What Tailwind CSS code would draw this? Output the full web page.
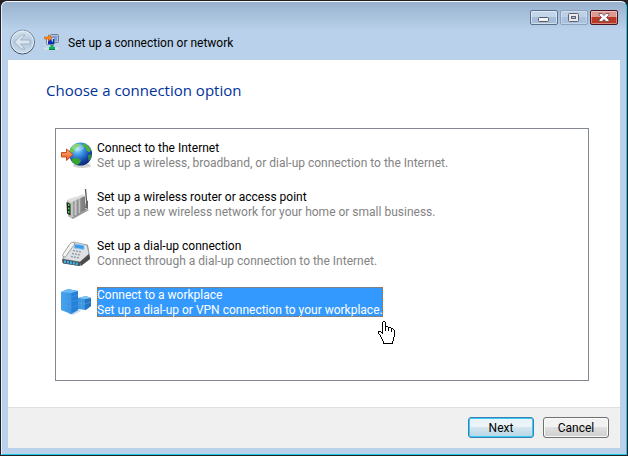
<!DOCTYPE html>
<html lang="en">
<head>
<meta charset="utf-8">
<title>Set up a connection or network</title>
<script src="https://cdn.jsdelivr.net/npm/@tailwindcss/browser@4"></script>
</head>
<body class="min-h-screen bg-[#241f22] font-['Roboto','Open_Sans',sans-serif] text-xs text-black">
<div class="flex min-h-screen flex-col p-px">
<main class="flex grow flex-col rounded-t-md border border-t-[#f4f8fc] border-r-[#19cbe6] border-b-[#19cbe6] border-l-[#e6f0fa] bg-[#b9d1ea] bg-linear-to-b from-[#98b2ce] from-0% to-[#b9d1ea] to-[28px] px-1.5 pb-1.5">
  <header class="flex h-[58px] flex-col">
    <div class="flex justify-end gap-0.5 pt-2 pr-0.5">
      <button aria-label="Minimize" class="flex h-[15px] w-7 items-center justify-center rounded-xs border border-[#5b6f8a] bg-linear-to-b from-[#c3d5e8] from-45% to-[#a5bed9] to-50% inset-ring inset-ring-white/50">
        <svg class="mt-1" width="12" height="6"><rect x=".5" y=".5" width="10" height="4" rx="1" fill="#f4f4f4" stroke="#545868"/></svg>
      </button>
      <button aria-label="Maximize" class="flex h-[15px] w-7 items-center justify-center rounded-xs border border-[#8ba3c0] bg-linear-to-b from-[#bdd0e6] from-45% to-[#a9c2de] to-50% inset-ring inset-ring-white/30">
        <svg width="12" height="9"><rect x=".5" y=".5" width="10" height="8" rx="1" fill="#e9e9ea" stroke="#5d6274"/><rect x="3.500" y="3.500" width="4" height="2" fill="#a9c2de" stroke="#5d6274"/></svg>
      </button>
      <button aria-label="Close" class="flex h-[15px] w-7 items-center justify-center rounded-xs border border-[#4a1420] bg-linear-to-b from-[#dd9a90] from-45% to-[#b93a25] to-50% inset-ring inset-ring-white/40">
        <svg width="12" height="9" viewBox="0 0 12 9"><path d="M1 .5h3l2 2 2-2h3v1.500L8.500 4.500 11 7v1.500H8l-2-2-2 2H1V7l2.500-2.500L1 2z" fill="#fbf9f9" stroke="#5a4a56" stroke-width=".8"/></svg>
      </button>
    </div>
    <div class="flex items-center pt-1 pl-0.5">
      <button aria-label="Back" class="size-[26px]" disabled>
        <svg width="26" height="26" viewBox="0 0 26 26">
          <defs><linearGradient id="bk" x2="0" y2="1"><stop stop-color="#d5e2ed"/><stop offset=".5" stop-color="#b5cade"/><stop offset="1" stop-color="#c8dced"/></linearGradient><linearGradient id="rim" x2="0" y2="1"><stop stop-color="#8195aa"/><stop offset="1" stop-color="#39485c"/></linearGradient></defs>
          <circle cx="12.500" cy="13" r="12" fill="url(#bk)" stroke="url(#rim)"/>
          <circle cx="12.500" cy="13" r="10.900" fill="none" stroke="#e5eef6"/>
          <path d="M11.500 6h3.500l-4.500 5H20v4h-9.500l4.500 5h-3.500L4.500 13z" fill="#dbe6ef" stroke="#9fb3c6"/>
        </svg>
      </button>
      <svg class="ml-2" width="16" height="16" viewBox="0 0 16 16">
        <rect x="6.500" y=".5" width="8" height="8" rx="1" fill="#b4bfd2" stroke="#707d98"/><rect x="8" y="2" width="5" height="5" fill="#7da2dc"/>
        <rect x="2.500" y="3.500" width="8" height="7" rx="1" fill="#dfe4ee" stroke="#77829a"/><rect x="4" y="5" width="6" height="5" fill="#0a2bb5"/><path d="M7 5h2v3H8z" fill="#8fb6ff"/>
        <path d="M0 14.500h5M11 14.500h4" stroke="#d9e1e6" stroke-width="2"/><path d="M6.500 11h3v2h1.500v2.500H5V13h1.500z" fill="#10b15b"/><path d="M5 15.500h6" stroke="#087c45"/>
        <path d="M.5 3h4V.8L8 4 4.500 7.200V5h-4z" fill="#ff8b22" stroke="#c95b08" stroke-width=".6"/>
      </svg>
      <h1 class="ml-2 pt-0.5">Set up a connection or network</h1>
    </div>
  </header>
  <section class="flex grow flex-col bg-white">
    <div class="flex grow flex-col pt-5 pr-[31px] pb-[26px] pl-[47px]">
      <h2 class="-ml-[9px] font-['Open_Sans',sans-serif] text-[15px] leading-5 text-[#003399]">Choose a connection option</h2>
      <ul class="mt-7 flex grow flex-col gap-[19px] border border-[#828790] pt-[11px] pl-1">
        <li><button class="flex h-[30px] items-center gap-[5px] text-left">
          <svg class="size-8" viewBox="0 0 32 32">
            <defs><radialGradient id="gl" cx=".35" cy=".28" r=".75"><stop stop-color="#a8e6ff"/><stop offset=".35" stop-color="#3f9be6"/><stop offset=".75" stop-color="#1546b0"/><stop offset="1" stop-color="#0c2870"/></radialGradient><linearGradient id="or" x2="0" y2="1"><stop stop-color="#ffb27a"/><stop offset="1" stop-color="#e9591a"/></linearGradient></defs>
            <ellipse cx="22" cy="26.500" rx="9" ry="2.500" fill="#777" opacity=".35"/>
            <circle cx="20.500" cy="15" r="11.500" fill="url(#gl)"/>
            <path d="M10 11c1-3 4-5.500 7-6.500l3 1-1 2-3 1-1 3-3 2-2 1z" fill="#69c74a"/><path d="M23 4c3 .5 6 3 8 6.500l-1.500 3-3-2-1-3-3-1z" fill="#4fb03f"/><path d="M12 20c3-2 6-1 9 1l-1 3-3 2c-3-.8-5-3-5.500-5z" fill="#35a52f"/><path d="M28 16l3.500-1c.5 3-1 5-3 7z" fill="#2c8f3a"/>
            <ellipse cx="18" cy="8.500" rx="6" ry="3.500" fill="#fff" opacity=".25"/>
            <path d="M1.500 13.500h5v-3.500l6.500 5.500-6.500 6v-3.500h-5z" fill="url(#or)" stroke="#c64c1c"/>
          </svg>
          <span class="flex h-[30px] flex-col pt-px leading-[15px]"><span>Connect to the Internet</span><span class="text-[#838383]">Set up a wireless, broadband, or dial-up connection to the Internet.</span></span>
        </button></li>
        <li><button class="flex h-[30px] items-center gap-[5px] text-left">
          <svg class="size-8" viewBox="0 0 32 32">
            <defs><linearGradient id="rt"><stop stop-color="#d6d6d6"/><stop offset=".6" stop-color="#a6a6a6"/><stop offset="1" stop-color="#777"/></linearGradient></defs>
            <path d="M8 28l5 3 16-9-5-2z" fill="#9a9a9a"/>
            <path d="M26.500 13L25.500 1" stroke="#555" stroke-width="1.300"/><path d="M25 20l1-8 2 1v8z" fill="#666"/>
            <path d="M8 13l15-6 2 2v13l-14 8z" fill="url(#rt)"/><path d="M7 12l4-2c5-1 9-2 12-4l2 2-15 7z" fill="#dedede"/>
            <path d="M14 13v15M18 11.500v15M22 9.500v14" stroke="#7c7c7c"/><path d="M15.200 13v14M19.200 11v14" stroke="#ddd" stroke-width=".8"/>
            <path d="M7 12l4 3v15l-3-2z" fill="#b9b9b9"/><path d="M6.500 14l4 2v11.500L7 25.500z" fill="#222"/>
            <path d="M8 16h1.500v2H8zm0 3.500h1.500v2H8zm0 3.500h1.500v2H8z" fill="#35e135"/>
          </svg>
          <span class="flex h-[30px] flex-col pt-px leading-[15px]"><span>Set up a wireless router or access point</span><span class="text-[#838383]">Set up a new wireless network for your home or small business.</span></span>
        </button></li>
        <li><button class="flex h-[30px] items-center gap-[5px] text-left">
          <svg class="size-8" viewBox="0 0 32 32">
            <path d="M2 25l2-8L25 7l3 1 2 12v2l-9 6.500-3 .5-15-3z" fill="#8b8e90"/>
            <path d="M3 22l6-13 5-4 13 3 2 9-9 8z" fill="#dfe2e4" stroke="#8e9295" stroke-width=".7"/>
            <path d="M2 22l18 3v4L3 26.500z" fill="#4c545b"/><path d="M20 25l9-8 1 5-9 7z" fill="#4b4b4b"/>
            <path d="M4 24.500l14 2.500" stroke="#38b6f1" stroke-width="2.500" stroke-dasharray="2 1"/>
            <path d="M15 7l9 1.500v4L14 11z" fill="#3f9be5" stroke="#8cc9f4" stroke-width=".7"/>
            <path d="M13 13.500l9 1.500M12 16.500l9 1.500M11 19.500l9 1.500" stroke="#8f9ca6" stroke-width="1.300" stroke-dasharray="2 1"/>
            <path d="M4 20c-2-.5-1.500-2-.5-3.500l6-9c1-2 4.500-3 5-1.500s-1 3-2 4L7 17.500c-.5 2-1.500 2.500-3 2.500z" fill="#f5f5f5" stroke="#888" stroke-width=".8"/>
          </svg>
          <span class="flex h-[30px] flex-col pt-px leading-[15px]"><span>Set up a dial-up connection</span><span class="text-[#838383]">Connect through a dial-up connection to the Internet.</span></span>
        </button></li>
        <li class="relative"><button class="flex h-[30px] items-center gap-[5px] text-left" aria-pressed="true">
          <svg class="size-8" viewBox="0 0 32 32">
            <defs><linearGradient id="tw"><stop stop-color="#49a3ec"/><stop offset="1" stop-color="#2f8cdf"/></linearGradient></defs>
            <path d="M8 28l5 1 8-4-3-2z" fill="#a4bfd8" opacity=".6"/>
            <path d="M1 6l7-3 10 2v19l-7 4-10-4z" fill="url(#tw)"/><path d="M11 7l7-2v19l-7 4z" fill="#2680d6"/><path d="M1 6l7-3 10 2-7 2z" fill="#6bb8f5"/>
            <path d="M11 7v21M1 10l10 1 7-2M1 15l10 1 7-2M1 20l10 1 7-2M6 7v18" fill="none" stroke="#4a9fe8" stroke-width=".5"/>
            <path d="M18 12l8-2 5 2v8l-5 4-8-1z" fill="#3a94df"/><path d="M25 13l6-1v8l-6 4z" fill="#2474c4"/><path d="M18 12l8-2 5 2-6 1z" fill="#83c6f5"/><path d="M18 17l7 1 6-2M21.500 13v10" fill="none" stroke="#60adeb" stroke-width=".5"/>
          </svg>
          <span class="flex h-[30px] flex-col bg-[#3399ff] pt-px leading-[15px] text-white outline-1 -outline-offset-1 outline-dotted outline-[#c46a14]"><span>Connect to a workplace</span><span>Set up a dial-up or VPN connection to your workplace.</span></span>
        </button>
        <svg class="absolute top-[34px] left-[318px]" width="17" height="23" viewBox="0 0 17 23" shape-rendering="crispEdges"><path d="M4.500 12.500V1.500l1-1h1l1 1v4h2l1 1h2l1 1h1l2 2v6l-1 1v3l-1 1v2h-9v-2l-1-1v-1l-1-1v-1l-1-1v-1l-2-2v-2h2l2 2z" fill="#fff" stroke="#000"/><path d="M7.500 5v5M10.500 6v4M13.500 7v4" stroke="#000"/></svg>
        </li>
      </ul>
    </div>
    <footer class="flex justify-end gap-[9px] border-t border-[#dfdfdf] bg-[#f0f0f0] pt-[9px] pr-[11px] pb-2.5">
      <button class="h-[21px] w-[66px] rounded-[3px] border border-[#3c7fb1] bg-linear-to-b from-[#e9f3f8] from-45% via-[#d3e6ef] via-50% to-[#b5d6e6] leading-4 inset-ring inset-ring-[#35ccf5]">Next</button>
      <button class="h-[21px] w-[66px] rounded-[3px] border border-[#707070] bg-linear-to-b from-[#f2f2f2] from-45% via-[#dfdfdf] via-50% to-[#cfcfcf] leading-4 inset-ring inset-ring-[#fafafa]">Cancel</button>
    </footer>
  </section>
</main>
</div>
</body>
</html>
